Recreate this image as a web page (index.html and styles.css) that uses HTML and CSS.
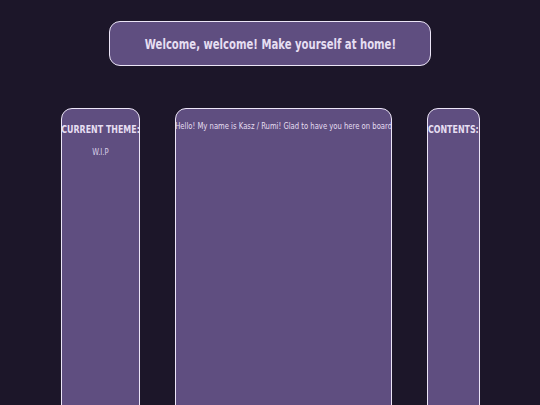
FILE: index.html
```html
<!DOCTYPE html>
<html>
<head>
<meta charset="utf-8">
<link rel="stylesheet" href="styles.css">
</head>
<body>
<div class="page">
  <header class="banner"><span class="narrow">Welcome, welcome! Make yourself at home!</span></header>
  <div class="columns">
    <aside class="col col-left">
      <h2 class="col-title"><span class="narrow">CURRENT THEME:</span></h2>
      <p class="wip"><span class="narrow">W.I.P</span></p>
    </aside>
    <main class="col col-main">
      <p class="intro"><span class="narrow">Hello! My name is Kasz / Rumi! Glad to have you here on board</span></p>
    </main>
    <aside class="col col-right">
      <h2 class="col-title"><span class="narrow">CONTENTS:</span></h2>
    </aside>
  </div>
</div>
</body>
</html>
```
FILE: styles.css
```css
html, body {
  margin: 0;
  padding: 0;
  background: #1c1629;
  overflow: hidden;
}
body {
  font-family: "DejaVu Sans", sans-serif;
  color: #e6def2;
  height: 405px;
}
.narrow {
  display: inline-block;
  white-space: nowrap;
  transform: scaleX(0.72);
  transform-origin: center;
}
.page {
  display: flex;
  flex-direction: column;
  align-items: center;
  padding-top: 21px;
}
.banner {
  box-sizing: border-box;
  width: 322px;
  height: 45px;
  background: #5f4e80;
  border: 1.5px solid #ece5f7;
  border-radius: 11px;
  display: flex;
  align-items: center;
  justify-content: center;
  font-weight: bold;
  font-size: 14px;
}
.columns {
  display: flex;
  gap: 35px;
  margin-top: 42px;
  margin-left: 1px;
}
.col {
  box-sizing: border-box;
  height: 340px;
  background: #5f4e80;
  border: 1.5px solid #ece5f7;
  border-radius: 11px;
}
.col-left { width: 79px; }
.col-main { width: 217px; }
.col-right { width: 53px; }
.col-title,
.wip,
.intro {
  display: flex;
  justify-content: center;
}
.col-title {
  margin: 14px 0 0;
  font-size: 11px;
  font-weight: bold;
}
.wip {
  margin: 10px 0 0;
  font-size: 9.5px;
  color: #d8cfe8;
}
.intro {
  margin: 11px 0 0;
  font-size: 9.5px;
}
```
